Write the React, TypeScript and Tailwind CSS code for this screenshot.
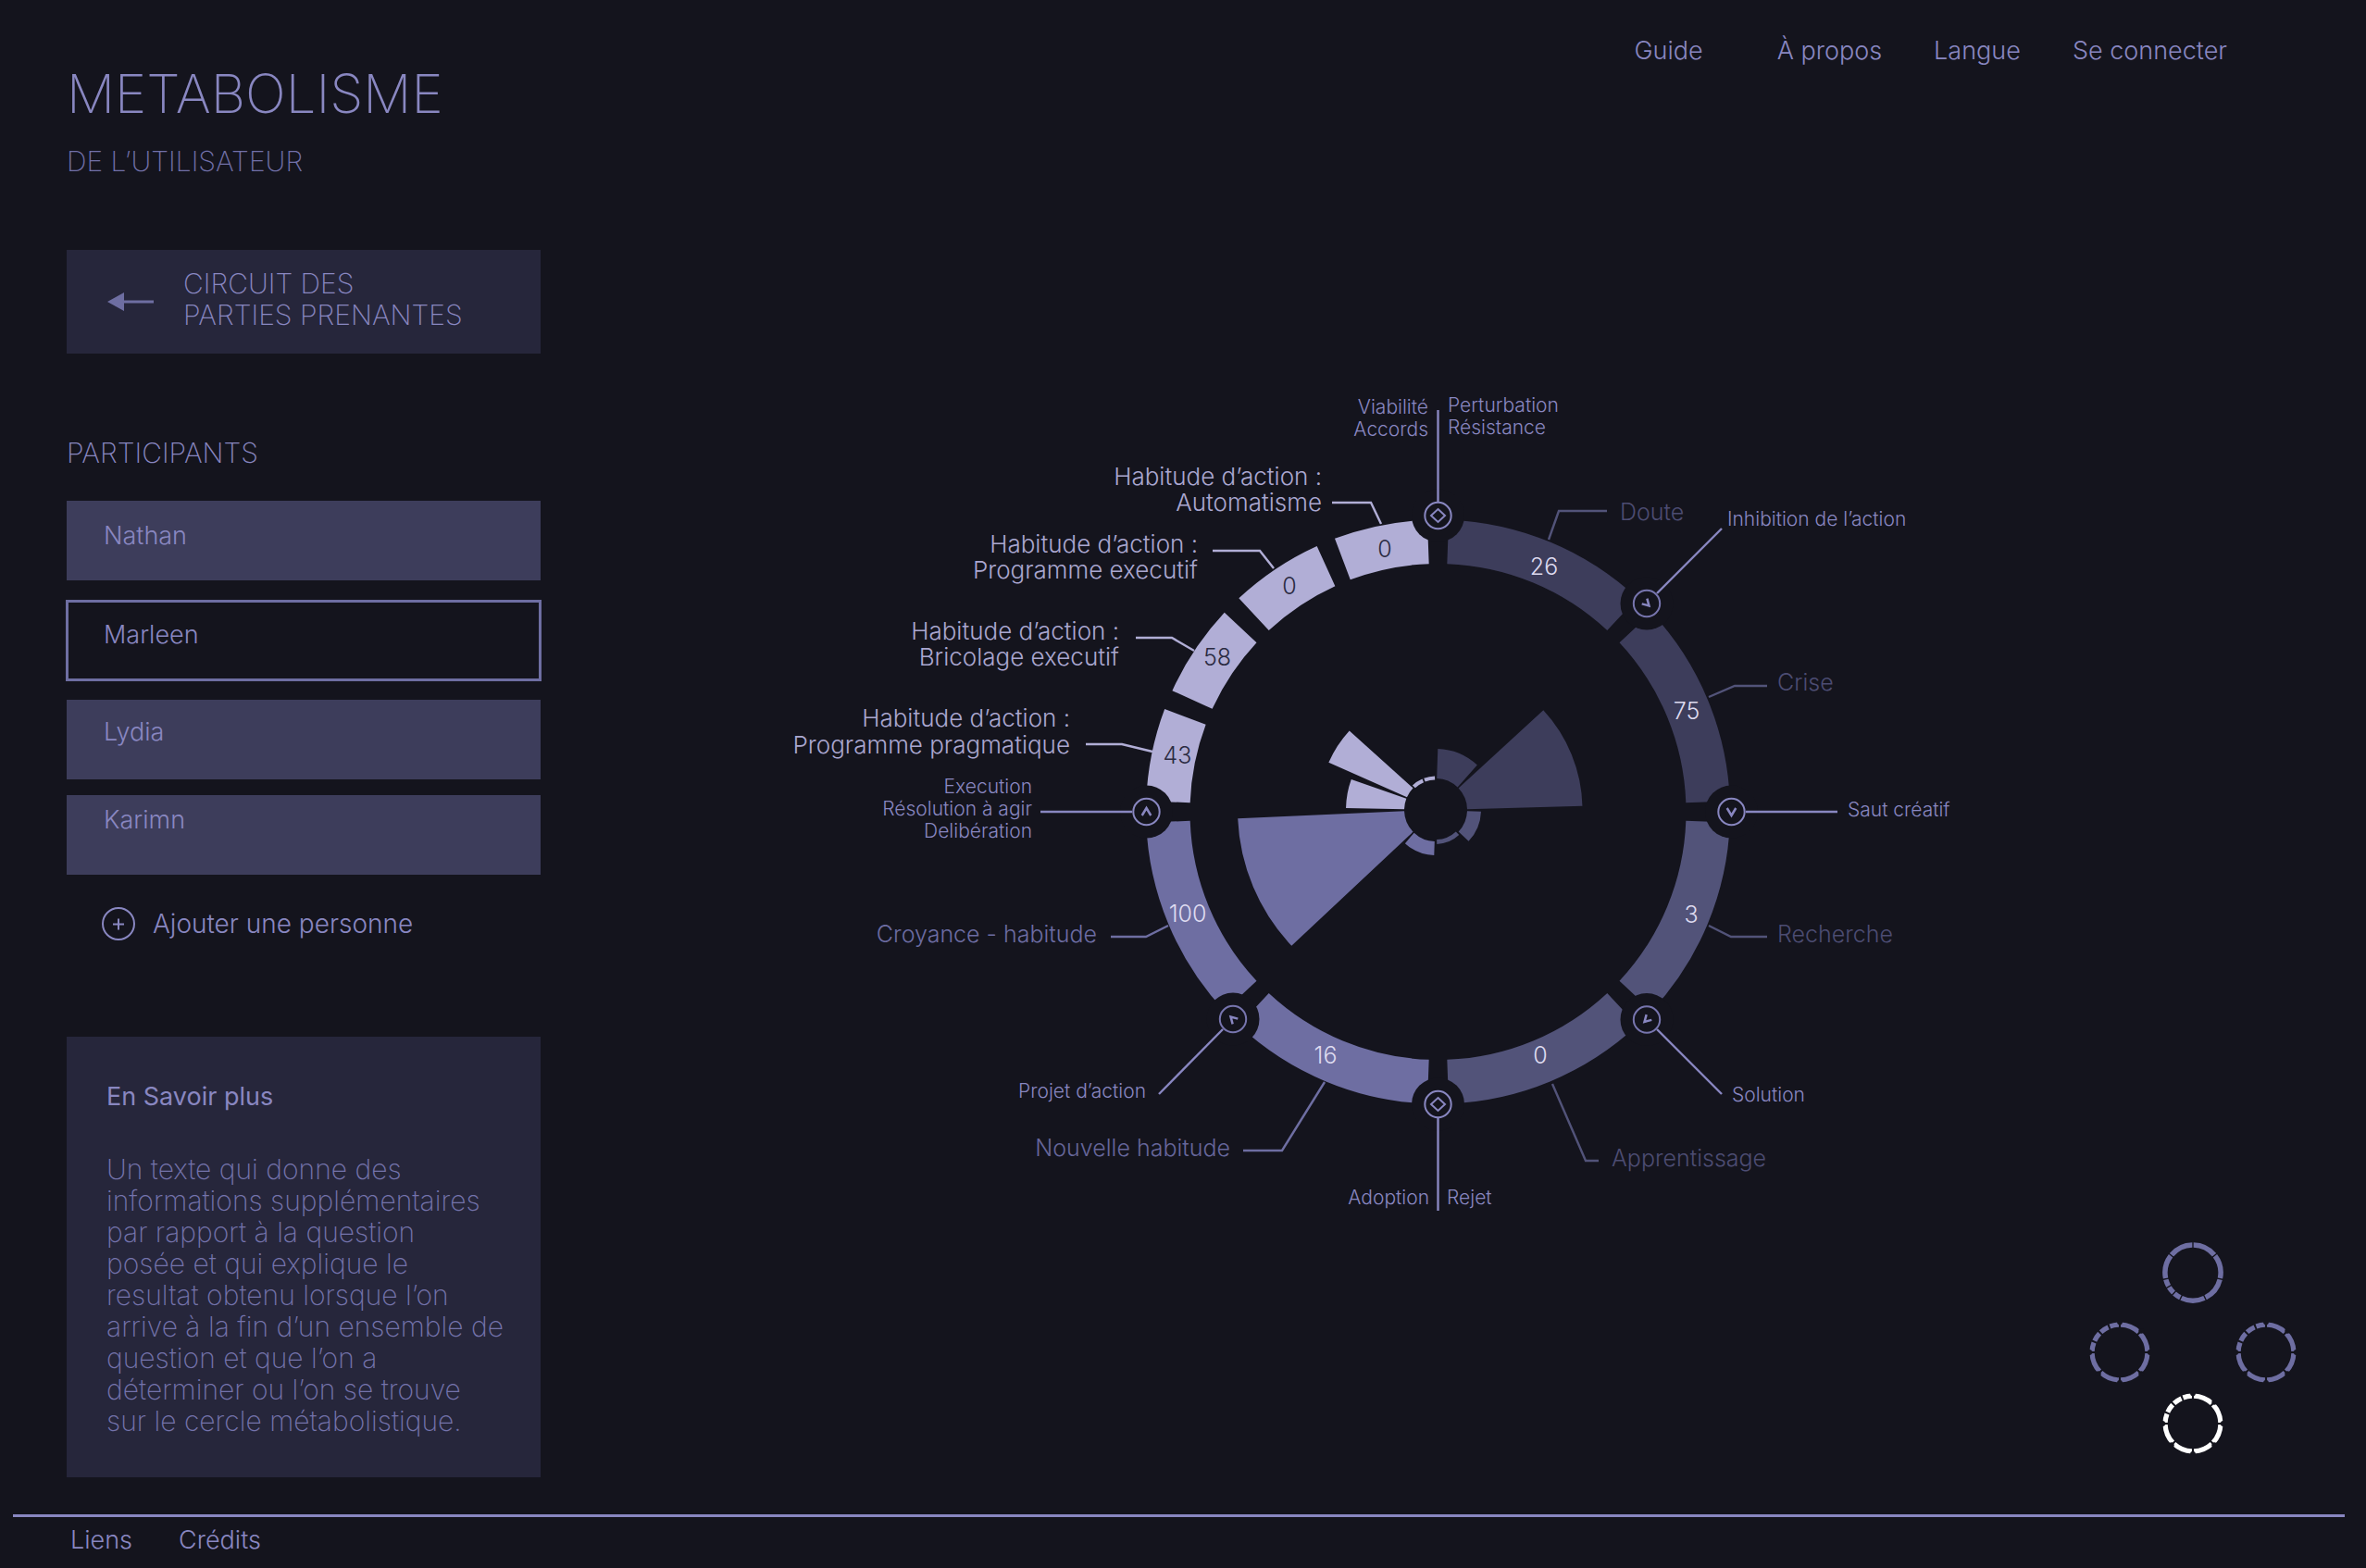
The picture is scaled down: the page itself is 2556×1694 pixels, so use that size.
import React from "react";

const INK = "#14141d";
const LINE = "#8987c1";

type Segment = { from: number; to: number; fill: string };

const C = { night: "#3d3d5b", slate: "#525379", iris: "#6e6ea2", lilac: "#b1aed6" };

const segments: Segment[] = [
  { from: 2.1, to: 43, fill: C.night },
  { from: 47, to: 87.9, fill: C.night },
  { from: 92.1, to: 133, fill: C.slate },
  { from: 137, to: 177.9, fill: C.slate },
  { from: 182.1, to: 223, fill: C.iris },
  { from: 227, to: 267.9, fill: C.iris },
  { from: 272.1, to: 290.6, fill: C.lilac },
  { from: 294.5, to: 313, fill: C.lilac },
  { from: 317, to: 335.5, fill: C.lilac },
  { from: 339.3, to: 357.9, fill: C.lilac },
];

/* inner radius, outer radius, inner angles, outer angles */
const petals: { r: [number, number]; a: [number, number]; b: [number, number]; fill: string }[] = [
  { r: [34, 66], a: [2, 44], b: [2, 42.8], fill: C.night },
  { r: [34, 158.5], a: [46.4, 88.6], b: [47.2, 88.5], fill: C.night },
  { r: [34, 49], a: [92, 133.5], b: [92, 133.5], fill: C.slate },
  { r: [32, 37], a: [137, 178], b: [137, 178], fill: C.slate },
  { r: [34, 49], a: [182, 223.5], b: [182, 222.5], fill: C.iris },
  { r: [34, 214], a: [226, 268], b: [226.7, 267.5], fill: C.iris },
  { r: [34, 97], a: [271.3, 291.2], b: [271.2, 289.9], fill: C.lilac },
  { r: [34, 126.5], a: [293.9, 314], b: [293.9, 312.5], fill: C.lilac },
  { r: [32.5, 36.5], a: [317, 336.5], b: [316.5, 336.5], fill: C.lilac },
  { r: [32.5, 36.5], a: [339.5, 358.5], b: [339.5, 358.5], fill: C.lilac },
];

function pt(cx: number, cy: number, r: number, deg: number) {
  const t = (deg * Math.PI) / 180;
  return `${(cx + r * Math.sin(t)).toFixed(2)} ${(cy - r * Math.cos(t)).toFixed(2)}`;
}

function sector(cx: number, cy: number, r: [number, number], a: [number, number], b: [number, number]) {
  return `M${pt(cx, cy, r[0], a[0])} L${pt(cx, cy, r[1], b[0])} A${r[1]} ${r[1]} 0 0 1 ${pt(cx, cy, r[1], b[1])} L${pt(cx, cy, r[0], a[1])} A${r[0]} ${r[0]} 0 0 0 ${pt(cx, cy, r[0], a[0])}Z`;
}

const nodes: { x: number; y: number; glyph: "diamond" | number; small?: boolean }[] = [
  { x: 1553.5, y: 557, glyph: "diamond" },
  { x: 1779, y: 652, glyph: -45, small: true },
  { x: 1870.5, y: 877, glyph: 0 },
  { x: 1779, y: 1101.5, glyph: 45, small: true },
  { x: 1553.5, y: 1193, glyph: "diamond" },
  { x: 1332, y: 1101, glyph: 135, small: true },
  { x: 1238.5, y: 877, glyph: 180 },
];

const values: [string, number, number, boolean][] = [
  ["26", 1668, 621, false],
  ["75", 1822, 777, false],
  ["3", 1827, 997, false],
  ["0", 1664, 1149, false],
  ["16", 1432, 1149, false],
  ["100", 1283, 996, false],
  ["43", 1272, 825, true],
  ["58", 1315, 719, true],
  ["0", 1393, 642, true],
  ["0", 1496, 602, true],
];

type Label = { t: string; x: number; y: number; end?: boolean; fill: string };

const stageLabels: Label[] = [
  { t: "Doute", x: 1750, y: 562, fill: "#4c4c72" },
  { t: "Crise", x: 1920, y: 746, fill: "#4c4c72" },
  { t: "Recherche", x: 1920, y: 1018, fill: "#4c4c72" },
  { t: "Apprentissage", x: 1741, y: 1260, fill: "#4c4c72" },
  { t: "Nouvelle habitude", x: 1329, y: 1249, end: true, fill: "#66669a" },
  { t: "Croyance - habitude", x: 1185, y: 1018, end: true, fill: "#6c6ca2" },
];

const habitLabels: Label[] = [
  { t: "Habitude d’action :", x: 1428, y: 524, end: true, fill: "#aaa7d0" },
  { t: "Automatisme", x: 1428, y: 552, end: true, fill: "#aaa7d0" },
  { t: "Habitude d’action :", x: 1294, y: 597, end: true, fill: "#aaa7d0" },
  { t: "Programme executif", x: 1294, y: 625, end: true, fill: "#aaa7d0" },
  { t: "Habitude d’action :", x: 1209, y: 691, end: true, fill: "#aaa7d0" },
  { t: "Bricolage executif", x: 1209, y: 719, end: true, fill: "#aaa7d0" },
  { t: "Habitude d’action :", x: 1156, y: 785, end: true, fill: "#aaa7d0" },
  { t: "Programme pragmatique", x: 1156, y: 814, end: true, fill: "#aaa7d0" },
];

const nodeLabels: Label[] = [
  { t: "Viabilité", x: 1543, y: 447, end: true, fill: LINE },
  { t: "Accords", x: 1543, y: 471, end: true, fill: LINE },
  { t: "Perturbation", x: 1564, y: 445, fill: LINE },
  { t: "Résistance", x: 1564, y: 469, fill: LINE },
  { t: "Inhibition de l’action", x: 1866, y: 568, fill: LINE },
  { t: "Saut créatif", x: 1996, y: 882, fill: LINE },
  { t: "Solution", x: 1871, y: 1190, fill: LINE },
  { t: "Rejet", x: 1563, y: 1301, fill: LINE },
  { t: "Adoption", x: 1544, y: 1301, end: true, fill: LINE },
  { t: "Projet d’action", x: 1238, y: 1186, end: true, fill: LINE },
  { t: "Execution", x: 1115, y: 857, end: true, fill: LINE },
  { t: "Résolution à agir", x: 1115, y: 881, end: true, fill: LINE },
  { t: "Delibération", x: 1115, y: 905, end: true, fill: LINE },
];

const leaders: [string, string][] = [
  ["M1736 552H1684L1673 583", C.slate],
  ["M1909 741H1874L1846 753", C.slate],
  ["M1909 1012H1870L1846 1000", C.slate],
  ["M1677 1171L1713 1254H1727", C.slate],
  ["M1431 1169L1385 1243H1343", C.iris],
  ["M1262 1000L1238 1012H1200", C.iris],
  ["M1439 543H1481L1492 566", C.lilac],
  ["M1310 595H1361L1376 614", C.lilac],
  ["M1227 689H1266L1290 703", C.lilac],
  ["M1173 804H1212L1245 812", C.lilac],
  ["M1553.5 443V542", LINE],
  ["M1553.5 1208V1308", LINE],
  ["M1124 877H1223", LINE],
  ["M1886 877H1985", LINE],
  ["M1860 571L1790 641", LINE],
  ["M1790 1112L1860 1182", LINE],
  ["M1321 1112L1252 1182", LINE],
];

function Labels({ items }: { items: Label[] }) {
  return (
    <>
      {items.map((l) => (
        <text key={`${l.x}-${l.y}`} x={l.x} y={l.y} textAnchor={l.end ? "end" : "start"} fill={l.fill}>
          {l.t}
        </text>
      ))}
    </>
  );
}

function MetabolicCircle() {
  return (
    <svg viewBox="840 420 1290 900" className="w-full max-w-[1290px]" role="img" aria-label="Cercle métabolistique">
      {segments.map((s) => (
        <path key={s.from} d={sector(1553.5, 877, [268, 315.5], [s.from, s.to], [s.from, s.to])} fill={s.fill} />
      ))}
      {petals.map((p) => (
        <path key={p.a[0]} d={sector(1551, 875, p.r, p.a, p.b)} fill={p.fill} />
      ))}
      {nodes.map((n) => (
        <circle key={`${n.x}-${n.y}`} cx={n.x} cy={n.y} r={28.5} fill={INK} />
      ))}
      {leaders.map(([d, stroke]) => (
        <path key={d} d={d} stroke={stroke} strokeWidth={2.4} fill="none" />
      ))}
      {nodes.map((n) => (
        <g key={`${n.x}-${n.y}`} transform={`translate(${n.x} ${n.y})`} fill="none" stroke={LINE} strokeWidth={2}>
          <circle r={14.2} stroke={n.small ? "#7775ae" : LINE} />
          {n.glyph === "diamond" ? (
            <path d="M0 -7L7.5 0L0 7L-7.5 0Z" />
          ) : (
            <path
              d={n.small ? "M-4 -3.5L0 3.5L4 -3.5" : "M-4.8 -4L0 4L4.8 -4"}
              transform={`rotate(${n.glyph})`}
              strokeWidth={2.5}
            />
          )}
        </g>
      ))}
      <g className="text-[25px]" textAnchor="middle">
        {values.map(([v, x, y, dark]) => (
          <text key={`${x}-${y}`} x={x} y={y} fill={dark ? "#2b2b42" : "#dedbf0"}>
            {v}
          </text>
        ))}
      </g>
      <g className="text-[25px]">
        <Labels items={stageLabels} />
      </g>
      <g className="text-[26px]">
        <Labels items={habitLabels} />
      </g>
      <g className="text-[21px]">
        <Labels items={nodeLabels} />
      </g>
    </svg>
  );
}

const turned = [0, 51.4, 102.8, 154.3, 205.7, 222.9, 240, 257.2, 308.6, 360];

function MiniRing({ label, color, plain }: { label: string; color: string; plain?: boolean }) {
  return (
    <button type="button" aria-label={label} className="size-[66px]">
      <svg viewBox="-33 -33 66 66" className="size-full">
        {plain
          ? turned.slice(0, -1).map((a, i) => (
              <path
                key={a}
                d={sector(0, 0, [27.3, 32.8], [a + 1.4, turned[i + 1] - 1.4], [a + 1.2, turned[i + 1] - 1.2])}
                fill={color}
              />
            ))
          : segments.map((s) => (
              <path key={s.from} d={sector(0, 0, [27.3, 32.5], [s.from, s.to], [s.from, s.to])} fill={color} />
            ))}
        {!plain &&
          [0, 45, 90, 135, 180, 225, 270].map((a) => {
            const [x, y] = pt(0, 0, 32.8, a).split(" ");
            return <circle key={a} cx={x} cy={y} r={2.9} fill={INK} />;
          })}
      </svg>
    </button>
  );
}

const people = [
  { name: "Nathan", style: "bg-[#3d3d5b] pt-[22px]" },
  { name: "Marleen", style: "mt-[22px] pt-[21px] outline-[3px] -outline-offset-2 outline-[#6e6ea2]", current: true },
  { name: "Lydia", style: "mt-[21px] bg-[#3d3d5b] pt-[19px]" },
  { name: "Karimn", style: "mt-[17px] bg-[#3d3d5b] pt-[11px]" },
];

const infoLines = [
  "Un texte qui donne des",
  "informations supplémentaires",
  "par rapport à la question",
  "posée et qui explique le",
  "resultat obtenu lorsque l’on",
  "arrive à la fin d’un ensemble de",
  "question et que l’on a",
  "déterminer ou l’on se trouve",
  "sur le cercle métabolistique.",
];

export default function App() {
  return (
    <div className="flex min-h-screen flex-col bg-[#14141d] font-['Inter',sans-serif] font-light text-[#8987c1]">
      <div className="flex flex-1">
        <aside className="ml-[72px] w-[512px] shrink-0 pt-[69px] pb-10">
          <h1 className="text-[58px] leading-[64px] font-extralight">METABOLISME</h1>
          <p className="mt-6 text-[30px] leading-[34px] font-extralight text-[#7170a8]">DE L’UTILISATEUR</p>

          <a
            href="#circuit"
            className="mt-[79px] flex h-[112px] bg-[#26263b] pt-[19px] pl-[44px] text-[30px] leading-[34px] font-extralight"
          >
            <svg viewBox="0 0 50 20" className="mt-[27px] h-5 w-[50px]" fill="#6e6ea2" aria-hidden="true">
              <path d="M0 10L18 0V8.6H50V11.4H18V20Z" />
            </svg>
            <span className="ml-8">
              CIRCUIT DES
              <br />
              PARTIES PRENANTES
            </span>
          </a>

          <h2 className="mt-[90px] text-[30px] leading-[34px] font-extralight">PARTICIPANTS</h2>
          <ul className="mt-[35px] flex flex-col text-[27px] leading-8">
            {people.map((p) => (
              <li key={p.name} className="contents">
                <button type="button" aria-pressed={!!p.current} className={`flex h-[86px] items-start pl-10 ${p.style}`}>
                  {p.name}
                </button>
              </li>
            ))}
          </ul>
          <button type="button" className="mt-[35px] ml-[38px] flex items-center gap-[19px] text-[28px] leading-8">
            <svg viewBox="0 0 36 36" className="size-9" fill="none" stroke="currentColor" strokeWidth="2" aria-hidden="true">
              <circle cx="18" cy="18" r="17" />
              <path d="M12 18.5H24M18 12.5V24.5" />
            </svg>
            Ajouter une personne
          </button>

          <section className="mt-[104px] bg-[#26263b] pt-[49px] pb-11 pl-[43px]">
            <h2 className="text-[27px] leading-8 font-normal">En Savoir plus</h2>
            <p className="mt-[45px] text-[30px] leading-[34px] font-extralight whitespace-nowrap text-[#7473ab]">
              {infoLines.map((l) => (
                <span key={l} className="block">
                  {l}
                </span>
              ))}
            </p>
          </section>
        </aside>

        <main className="flex min-w-0 flex-1 flex-col">
          <nav className="flex justify-end gap-[56px] pt-[39px] pr-[150px] text-[27px] leading-8">
            <a href="#guide" className="mr-6">
              Guide
            </a>
            <a href="#a-propos">À propos</a>
            <a href="#langue">Langue</a>
            <a href="#connexion">Se connecter</a>
          </nav>
          <div className="mt-[349px] flex justify-center pr-[170px]">
            <MetabolicCircle />
          </div>
          <div className="mt-[22px] mr-[75px] flex flex-col items-center self-end">
            <MiniRing label="Circuit principal" color="#6e6ea2" plain />
            <div className="mt-5 mb-[11px] flex gap-[92px]">
              <MiniRing label="Circuit gauche" color="#6e6ea2" />
              <MiniRing label="Circuit droit" color="#6e6ea2" />
            </div>
            <MiniRing label="Circuit utilisateur" color="#ffffff" />
          </div>
        </main>
      </div>

      <footer className="mr-[23px] ml-[14px] flex gap-[50px] border-t-[3px] border-[#8987c1] pt-[9px] pb-[14px] pl-[62px] text-[27px] leading-8">
        <a href="#liens">Liens</a>
        <a href="#credits">Crédits</a>
      </footer>
    </div>
  );
}
